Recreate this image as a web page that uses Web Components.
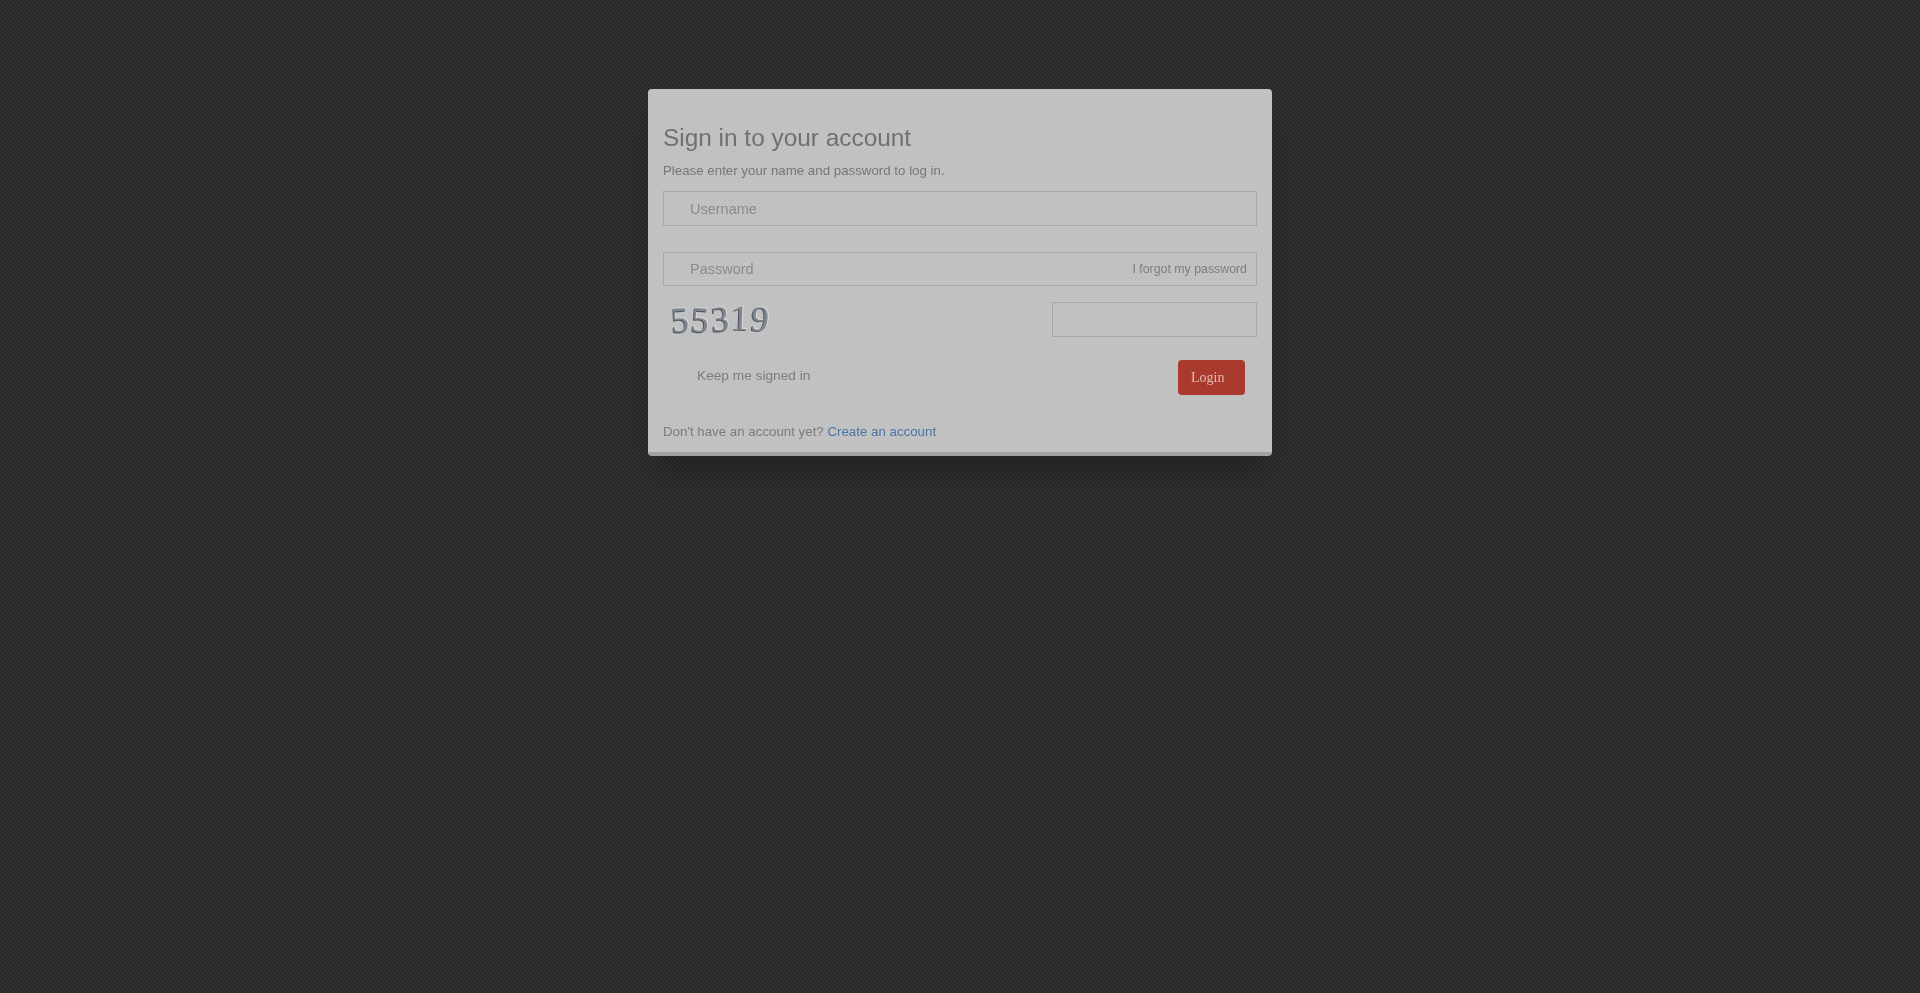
<!DOCTYPE html>
<html lang="en">
<head>
<meta charset="utf-8">
<title>Sign in</title>
<style>
    html, body { margin: 0; height: 100%; }
    body {
        min-height: 993px;
        overflow: hidden;
        font-family: "Liberation Sans", Arial, sans-serif;
        background-color: #2f2f2f;
        background-image:
            linear-gradient(135deg, rgba(0,0,0,.2) 25%, transparent 25%, transparent 50%, rgba(0,0,0,.2) 50%, rgba(0,0,0,.2) 75%, transparent 75%),
            linear-gradient(45deg, rgba(255,255,255,.03) 25%, transparent 25%, transparent 50%, rgba(255,255,255,.03) 50%, rgba(255,255,255,.03) 75%, transparent 75%);
        background-size: 4px 4px, 4px 4px;
    }
</style>
</head>
<body>
<login-card>
    <span slot="title">Sign in to your account</span>
    <span slot="intro">Please enter your name and password to log in.</span>
    <login-field slot="fields">Username</login-field>
    <login-field slot="fields" gap>Password<a slot="aside">I forgot my password</a></login-field>
    <captcha-row slot="captcha" code="55319"></captcha-row>
    <span slot="remember">Keep me signed in</span>
    <login-button slot="action">Login</login-button>
    <span slot="footer">Don't have an account yet? <a style="color: #4a76a4">Create an account</a></span>
</login-card>

<script>
class LoginCard extends HTMLElement {
    constructor() {
        super();
        this.attachShadow({ mode: "open" }).innerHTML = `
            <style>
                :host {
                    display: block;
                    box-sizing: border-box;
                    width: 624px;
                    height: 367px;
                    margin: 89px auto 0;
                    padding: 36px 15px 0;
                    border-radius: 4px;
                    border-bottom: 4px solid #a2a2a2;
                    background-color: #c4c4c4;
                    background-image: linear-gradient(135deg, rgba(0,0,0,.03) 25%, transparent 25%, transparent 50%, rgba(0,0,0,.03) 50%, rgba(0,0,0,.03) 75%, transparent 75%);
                    background-size: 4px 4px;
                    box-shadow: 0 22px 34px -10px rgba(0,0,0,.3);
                    filter: blur(.35px);
                    color: #6f6f6f;
                }
                .title { font-size: 24.4px; line-height: 26px; color: #707070; }
                .intro { font-size: 13.3px; line-height: 20px; margin-top: 10px; color: #767676; }
                .fields { margin-top: 10px; }
                .actions {
                    display: flex;
                    justify-content: space-between;
                    align-items: flex-start;
                    margin-top: 23px;
                    padding: 0 12px 0 34px;
                    font-size: 13.7px;
                    line-height: 32px;
                    color: #7c7c7c;
                }
                .footer {
                    margin: 16px 0 0;
                    padding: 10px 0 0;
                    border-top: 1px dotted #b6b6b6;
                    font-size: 13.3px;
                    line-height: 20px;
                    color: #7b7b7b;
                }
            </style>
            <div class="title"><slot name="title"></slot></div>
            <div class="intro"><slot name="intro"></slot></div>
            <div class="fields"><slot name="fields"></slot></div>
            <slot name="captcha"></slot>
            <div class="actions"><slot name="remember"></slot><slot name="action"></slot></div>
            <div class="footer"><slot name="footer"></slot></div>
        `;
    }
}

class LoginField extends HTMLElement {
    constructor() {
        super();
        this.attachShadow({ mode: "open" }).innerHTML = `
            <style>
                :host {
                    display: flex;
                    justify-content: space-between;
                    align-items: center;
                    box-sizing: border-box;
                    height: 35px;
                    padding: 0 9px 0 26px;
                    border: 1px solid #a8a8a8;
                    font-size: 14.5px;
                    color: #8a8a8a;
                }
                :host([gap]) { margin-top: 26px; height: 34px; }
                ::slotted(a) { font-size: 12.35px; color: #7d7d7d; }
            </style>
            <span><slot></slot></span>
            <slot name="aside"></slot>
        `;
    }
}

class CaptchaRow extends HTMLElement {
    constructor() {
        super();
        this.attachShadow({ mode: "open" });
    }

    connectedCallback() {
        const tilts = [-3, 4, -4, 2, 6];
        const lifts = [1, 1, 0, -1, 0];
        const digits = this.getAttribute("code").split("").map((d, i) => {
            return `<span style="transform: translateY(${lifts[i]}px) rotate(${tilts[i]}deg)">${d}</span>`;
        }).join("");
        this.shadowRoot.innerHTML = `
            <style>
                :host {
                    display: flex;
                    justify-content: space-between;
                    align-items: center;
                    height: 35px;
                    margin-top: 16px;
                }
                .code {
                    display: flex;
                    margin-left: 8px;
                    font-family: "Liberation Serif", serif;
                    font-size: 36px;
                    line-height: 35px;
                    color: #7f868e;
                    text-shadow: -1px 1px 0 #4a535d, 1px -1px 0 #d6d6d6;
                }
                .code span { display: block; width: 20px; }
                .box {
                    box-sizing: border-box;
                    width: 205px;
                    height: 35px;
                    border: 1px solid #a8a8a8;
                }
            </style>
            <div class="code">${digits}</div>
            <div class="box"></div>
        `;
    }
}

class LoginButton extends HTMLElement {
    constructor() {
        super();
        this.attachShadow({ mode: "open" }).innerHTML = `
            <style>
                :host {
                    display: block;
                    box-sizing: border-box;
                    width: 67px;
                    height: 35px;
                    padding-left: 13px;
                    border-radius: 4px;
                    background: #a93a2d;
                    font-family: "Liberation Serif", serif;
                    font-size: 14px;
                    line-height: 36px;
                    color: #e0bdb6;
                }
            </style>
            <slot></slot>
        `;
    }
}

customElements.define("login-card", LoginCard);
customElements.define("login-field", LoginField);
customElements.define("captcha-row", CaptchaRow);
customElements.define("login-button", LoginButton);
</script>
</body>
</html>
